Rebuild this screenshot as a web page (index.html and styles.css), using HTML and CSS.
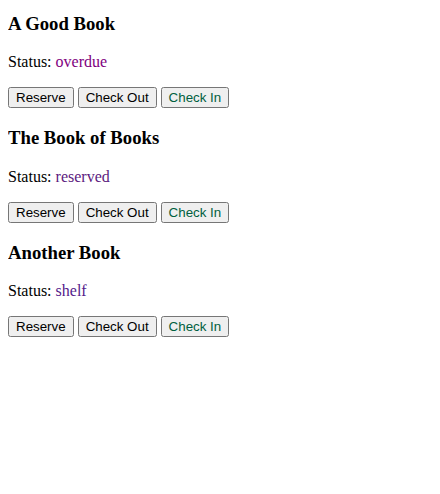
FILE: index.html
```html
<!DOCTYPE html>
<html>
<head>
<meta charset="utf-8">
<link rel="stylesheet" href="styles.css">
</head>
<body>
<div class="book">
  <h3 class="title">A Good Book</h3>
  <p class="status">Status: <span class="overdue">overdue</span></p>
  <div class="actions"><button class="btn">Reserve</button> <button class="btn">Check Out</button> <button class="btn checkin">Check In</button></div>
</div>
<div class="book">
  <h3 class="title">The Book of Books</h3>
  <p class="status">Status: <span class="reserved">reserved</span></p>
  <div class="actions"><button class="btn">Reserve</button> <button class="btn">Check Out</button> <button class="btn checkin">Check In</button></div>
</div>
<div class="book">
  <h3 class="title">Another Book</h3>
  <p class="status">Status: <span class="shelf">shelf</span></p>
  <div class="actions"><button class="btn">Reserve</button> <button class="btn">Check Out</button> <button class="btn checkin">Check In</button></div>
</div>
</body>
</html>
```
FILE: styles.css
```css
body {
  margin: 0 8px 8px;
  font-family: "Liberation Serif", serif;
  font-size: 16px;
  color: #000;
  background: #fff;
}
.title {
  font-size: 1.17em;
  font-weight: bold;
  margin: 1em 0;
}
.book:first-child .title {
  margin-top: 12.7px;
}
.status {
  margin: 1em 0;
}
.overdue { color: purple; }
.reserved { color: #5c1a80; }
.shelf { color: #551a8b; }
.btn {
  font-family: "Liberation Sans", sans-serif;
  font-size: 13.333px;
}
.checkin { color: #006040; }
```
